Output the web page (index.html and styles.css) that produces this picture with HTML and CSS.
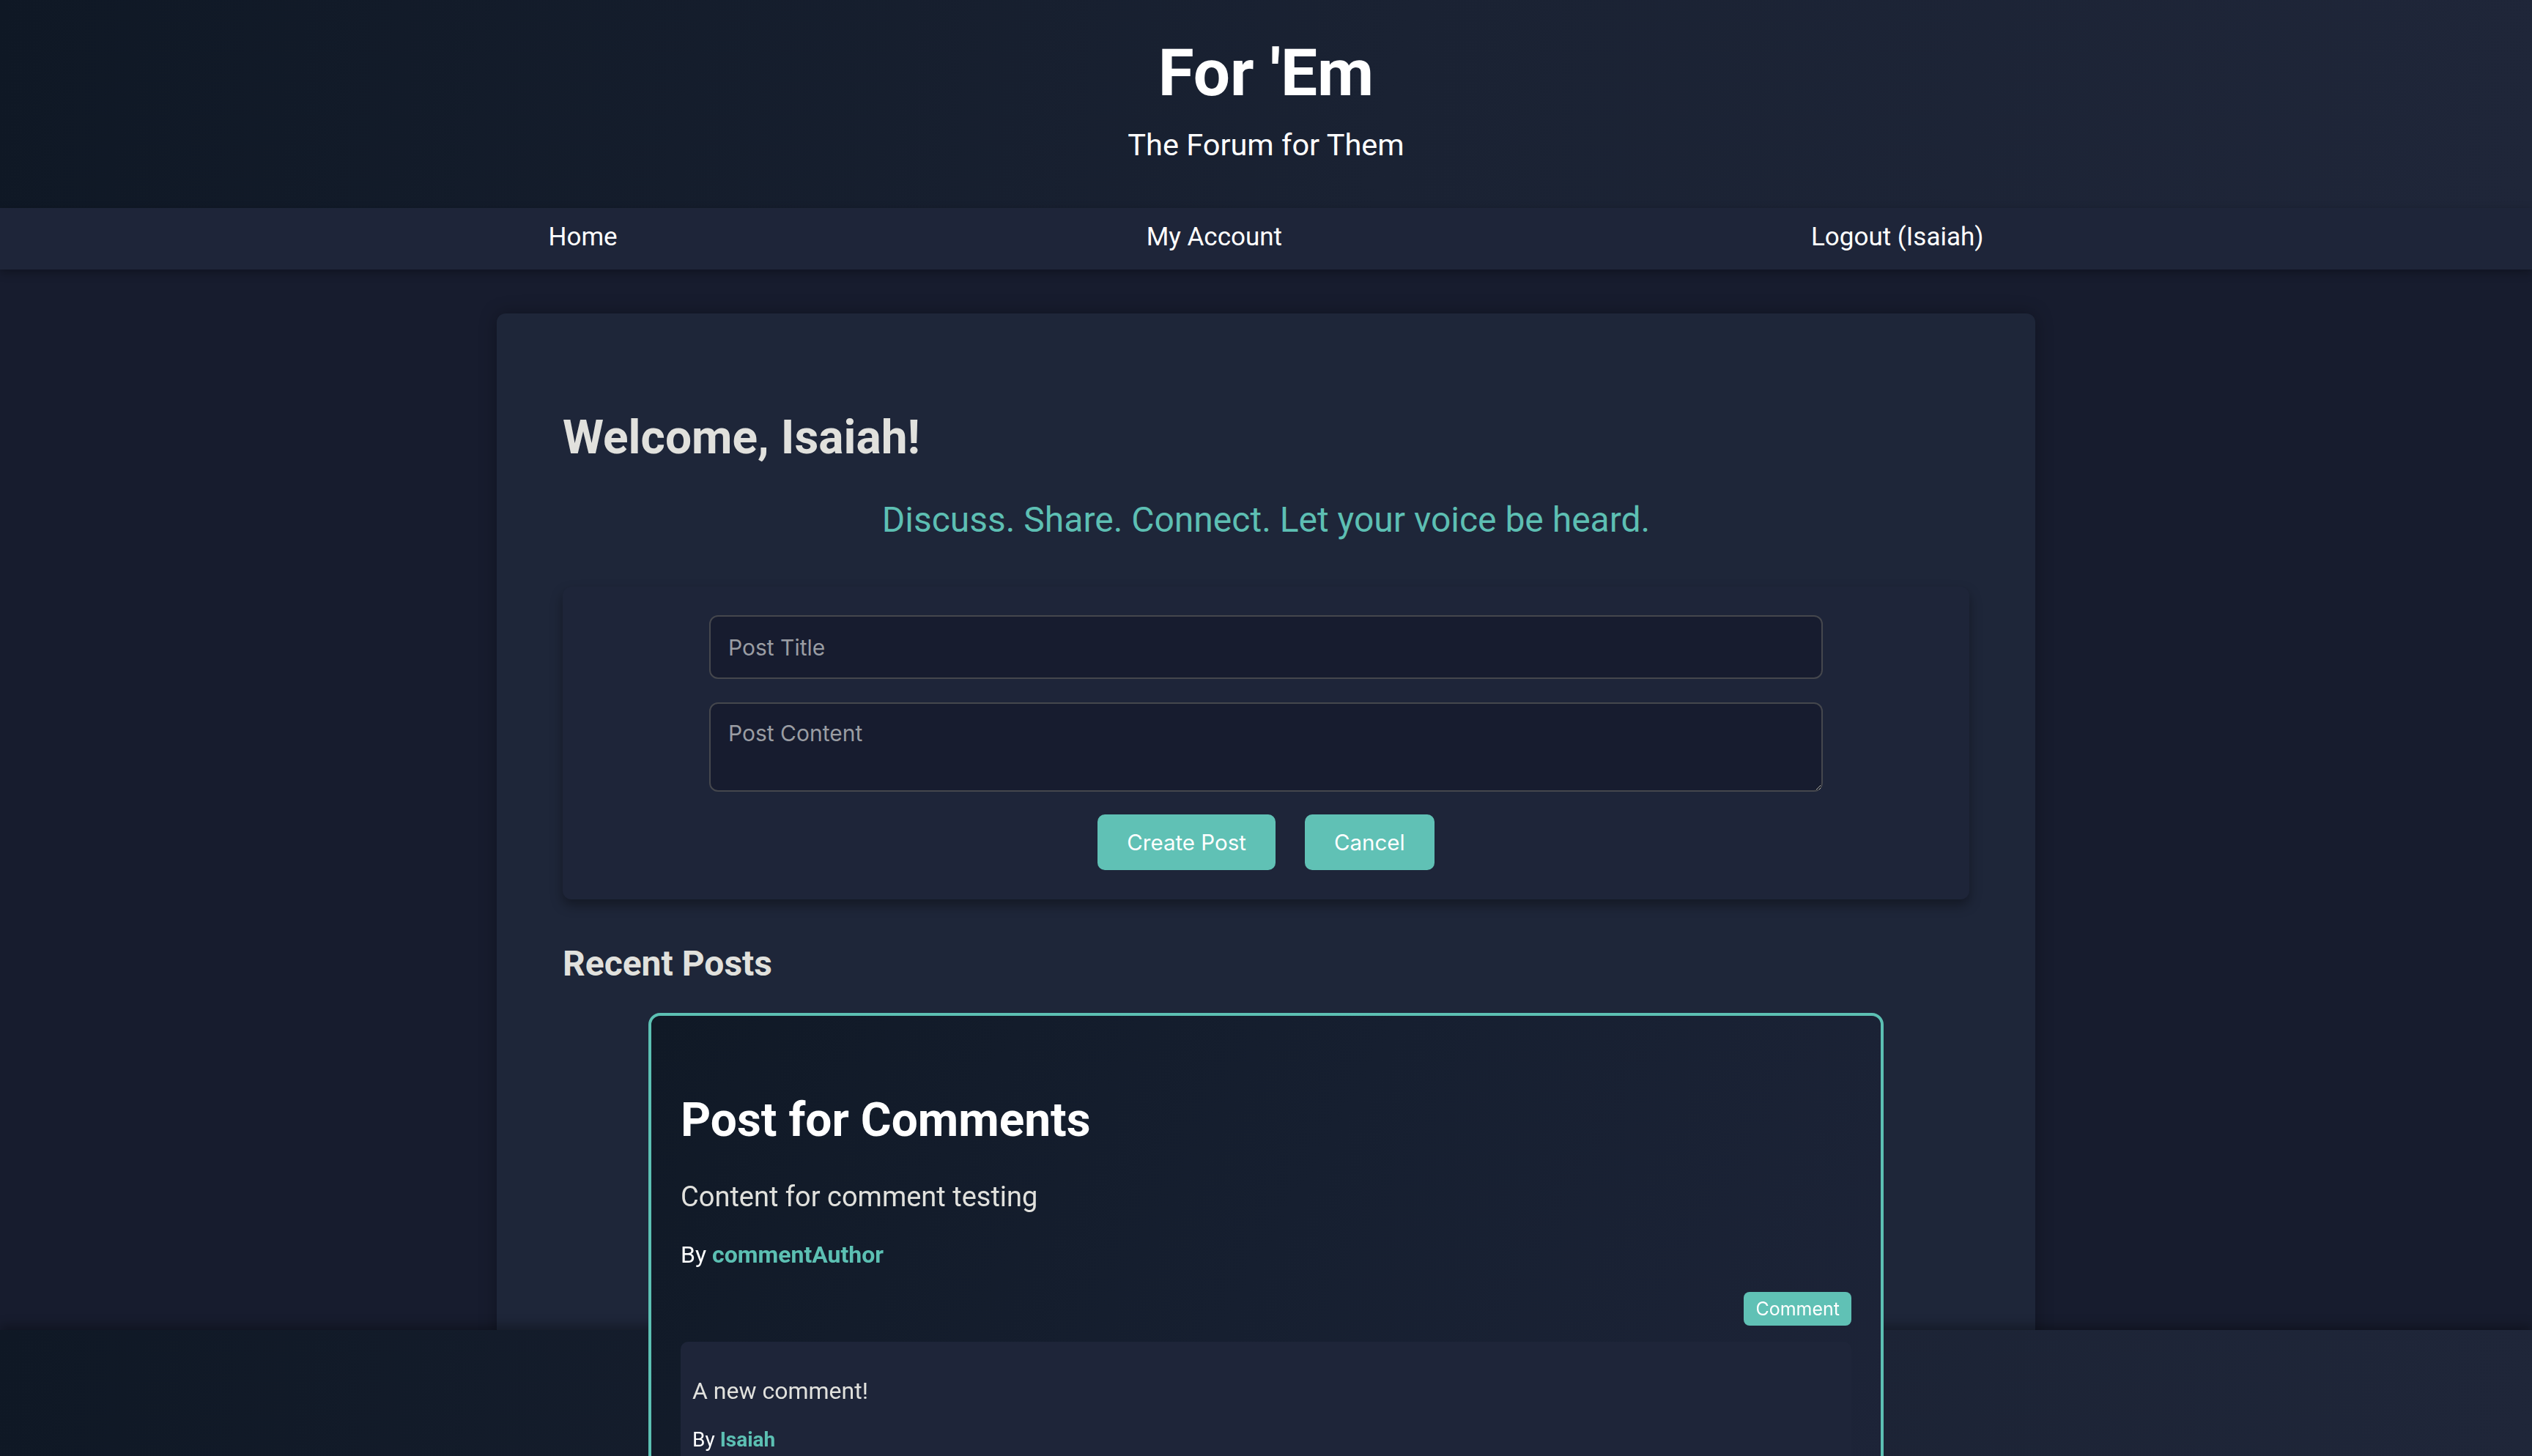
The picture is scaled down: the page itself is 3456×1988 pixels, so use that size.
FILE: index.html
```html
<!DOCTYPE html>
<html lang="en">
<head>
<meta charset="utf-8">
<title>For 'Em</title>
<link rel="stylesheet" href="styles.css">
</head>
<body>
<header class="site-header">
  <h1 class="site-title">For 'Em</h1>
  <p class="site-subtitle">The Forum for Them</p>
</header>
<nav class="site-nav">
  <div class="nav-inner">
    <a class="nav-link" href="#">Home</a>
    <a class="nav-link" href="#">My Account</a>
    <a class="nav-link" href="#">Logout (Isaiah)</a>
  </div>
</nav>
<main class="main-card">
  <h2 class="welcome">Welcome, Isaiah!</h2>
  <p class="tagline">Discuss. Share. Connect. Let your voice be heard.</p>
  <form class="post-form">
    <input class="field" type="text" placeholder="Post Title">
    <textarea class="field field-area" placeholder="Post Content"></textarea>
    <div class="form-actions">
      <button class="btn" type="button">Create Post</button>
      <button class="btn" type="button">Cancel</button>
    </div>
  </form>
  <h2 class="section-title">Recent Posts</h2>
  <article class="post-card">
    <h3 class="post-title">Post for Comments</h3>
    <p class="post-body">Content for comment testing</p>
    <p class="byline">By <span class="author">commentAuthor</span></p>
    <div class="post-actions"><button class="btn-small" type="button">Comment</button></div>
    <div class="comment">
      <p class="comment-body">A new comment!</p>
      <p class="byline byline-comment">By <span class="author">Isaiah</span></p>
    </div>
  </article>
</main>
<footer class="site-footer"></footer>
</body>
</html>
```

FILE: styles.css
```css
html, body {
  margin: 0;
  padding: 0;
}

body {
  background: #171c2e;
  font-family: Roboto, "Liberation Sans", sans-serif;
  color: #ffffff;
  min-height: 2600px;
}

.site-header {
  background: linear-gradient(100deg, #0f1825 0%, #1a2233 55%, #1f2639 100%);
  text-align: center;
  padding: 47px 0 62px;
}

.site-title {
  margin: 0;
  font-size: 89px;
  font-weight: 700;
  line-height: normal;
  color: #ffffff;
}

.site-subtitle {
  margin: 21px 0 0;
  font-size: 41.5px;
  line-height: normal;
  color: #ffffff;
}

.site-nav {
  box-sizing: border-box;
  background: #1e2539;
  height: 84px;
  padding-bottom: 5px;
  display: flex;
  align-items: center;
  box-shadow: 0 4px 12px rgba(0, 0, 0, 0.3);
  position: relative;
}

.nav-inner {
  width: 2681px;
  margin: 0 auto;
  display: flex;
  justify-content: space-around;
}

.nav-link {
  color: #ffffff;
  text-decoration: none;
  font-size: 35px;
}

.main-card {
  box-sizing: border-box;
  width: 2100px;
  margin: 60px auto 0;
  padding: 90px;
  background: #1e2639;
  border-radius: 12px;
  box-shadow: 0 0 24px rgba(0, 0, 0, 0.3);
}

.welcome {
  margin: 42px 0 0;
  font-size: 64px;
  font-weight: 700;
  line-height: normal;
  color: #e1e1dd;
}

.tagline {
  margin: 46px 0 0;
  text-align: center;
  font-size: 48px;
  line-height: normal;
  color: #5dbfb3;
}

.post-form {
  margin-top: 63px;
  padding: 39px 40px 40px;
  display: flex;
  flex-direction: column;
  align-items: center;
  background: #1e2539;
  border-radius: 12px;
  box-shadow: 0 8px 16px rgba(0, 0, 0, 0.35);
}

.field {
  box-sizing: border-box;
  width: 1520px;
  height: 87px;
  margin: 0;
  padding: 0 24px;
  background: #171c2f;
  border: 2px solid #45474d;
  border-radius: 12px;
  font-family: Inter, "Noto Sans", sans-serif;
  font-size: 30px;
  color: #ffffff;
  outline: none;
}

.field::placeholder {
  color: #9a9da3;
}

.field-area {
  height: 122px;
  margin-top: 32px;
  padding: 22px 24px;
  resize: vertical;
  display: block;
}

.form-actions {
  margin-top: 31px;
  display: flex;
  gap: 40px;
}

.btn {
  height: 76px;
  padding: 0 40px;
  background: #60c1b5;
  color: #ffffff;
  border: none;
  border-radius: 10px;
  font-family: Inter, "Noto Sans", sans-serif;
  font-size: 29.5px;
}

.section-title {
  margin: 59px 0 0;
  font-size: 48px;
  font-weight: 700;
  line-height: normal;
  color: #e1e1dd;
}

.post-card {
  position: relative;
  z-index: 2;
  box-sizing: border-box;
  width: 1686px;
  margin: 39px auto 0;
  padding: 44px 40px 40px;
  border: 4px solid #5cc0b3;
  border-radius: 16px;
  background: linear-gradient(120deg, #101926 0%, #161f30 50%, #1d2438 100%);
}

.post-title {
  margin: 61px 0 0;
  font-size: 64px;
  font-weight: 700;
  line-height: normal;
  color: #ffffff;
}

.post-body {
  margin: 45px 0 0;
  font-size: 38px;
  line-height: normal;
  color: #e1e1dd;
}

.byline {
  margin: 38px 0 0;
  font-size: 32px;
  line-height: normal;
  color: #ffffff;
}

.author {
  color: #5cc0b3;
  font-weight: 700;
}

.post-actions {
  margin-top: 32px;
  display: flex;
  justify-content: flex-end;
}

.btn-small {
  height: 46px;
  padding: 0 16px;
  background: #60c1b5;
  color: #ffffff;
  border: none;
  border-radius: 8px;
  font-family: Inter, "Noto Sans", sans-serif;
  font-size: 25px;
}

.comment {
  margin-top: 22px;
  padding: 16px;
  background: #1e2539;
  border-radius: 10px;
}

.comment-body {
  margin: 32px 0 0;
  font-size: 32px;
  line-height: normal;
  color: #e1e1dd;
}

.byline-comment {
  margin-top: 31px;
  font-size: 28px;
}

.site-footer {
  position: fixed;
  left: 0;
  right: 0;
  bottom: 0;
  height: 172px;
  z-index: 1;
  background: linear-gradient(100deg, #0f1825 0%, #1a2233 55%, #1f2639 100%);
  box-shadow: 0 -6px 14px rgba(0, 0, 0, 0.3);
}
```
